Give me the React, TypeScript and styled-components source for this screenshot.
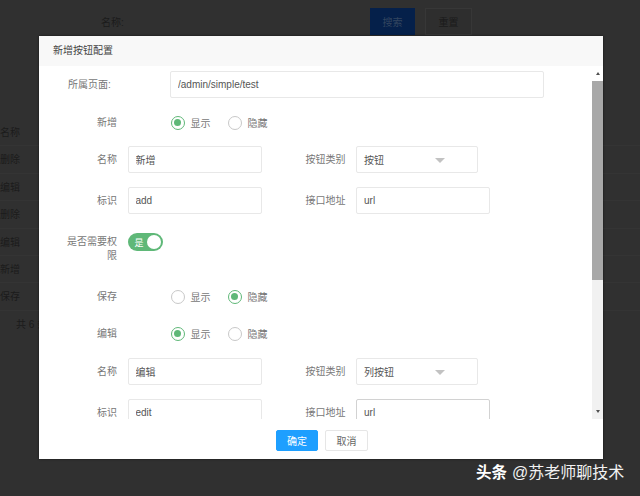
import * as React from "react";
import styled, { createGlobalStyle } from "styled-components";

const GlobalStyle = createGlobalStyle`
  html, body {
    margin: 0;
    height: 100%;
    overflow: hidden;
    background: #303030;
  }
  body {
    font-family: "Liberation Sans", "Noto Sans CJK SC", sans-serif;
  }
`;

const Page = styled.div`
  position: relative;
  width: 640px;
  height: 496px;
  overflow: hidden;
  background: #303030;
  font-size: 10px;
  color: #1b1b1b;
`;

const SearchBar = styled.div`
  display: flex;
  align-items: center;
  height: 27px;
  padding: 8px 0 0 101px;
`;

const SearchLabel = styled.span`
  width: 269px;
`;

const DimButton = styled.div<{ $primary?: boolean }>`
  display: flex;
  align-items: center;
  justify-content: center;
  box-sizing: border-box;
  width: ${(p) => (p.$primary ? 45 : 47)}px;
  height: 27px;
  margin-right: ${(p) => (p.$primary ? 10 : 0)}px;
  background: ${(p) => (p.$primary ? "#05204a" : "#2e2e2e")};
  border: 1px solid ${(p) => (p.$primary ? "#05204a" : "#373737")};
  color: ${(p) => (p.$primary ? "#33455f" : "#1b1b1b")};
`;

const DimTable = styled.div`
  margin-top: 84px;
`;

const DimRow = styled.div`
  height: 27.4px;
  line-height: 27px;
  box-sizing: border-box;
  border-bottom: 1px solid #343434;
`;

const DimPager = styled.div`
  padding-left: 16px;
  height: 27px;
  line-height: 28px;
`;

const Modal = styled.div`
  position: absolute;
  left: 39px;
  top: 36px;
  width: 564px;
  height: 423px;
  display: flex;
  flex-direction: column;
  background: #fff;
  box-shadow: 0 0 2px rgba(0, 0, 0, 0.6);
`;

const ModalTitle = styled.div`
  height: 30px;
  line-height: 30px;
  padding-left: 14px;
  background: #f8f8f8;
  color: #444;
  font-size: 10px;
  flex: none;
`;

const ModalBody = styled.div`
  display: flex;
  flex: 1;
  min-height: 0;
`;

const FormArea = styled.div`
  flex: 1;
  overflow: hidden;
  padding-top: 5px;
`;

const Row = styled.div<{ $top?: number }>`
  display: flex;
  align-items: center;
  min-height: 27px;
  margin-top: ${(p) => p.$top ?? 0}px;
`;

const Label = styled.label`
  flex: none;
  box-sizing: border-box;
  width: 78px;
  padding-top: 1px;
  text-align: right;
  line-height: 14px;
  color: #777;
  font-size: 10px;
  margin-right: 10.5px;
`;

const PathLabel = styled(Label)`
  width: 131px;
  padding-left: 29px;
  text-align: left;
  margin-right: 0;
`;

const SideLabel = styled(Label)`
  width: 84px;
`;

const Field = styled.input<{ $width: number; $focused?: boolean }>`
  flex: none;
  box-sizing: border-box;
  width: ${(p) => p.$width}px;
  height: 27px;
  padding: 0 7px;
  border: 1px solid ${(p) => (p.$focused ? "#d2d2d2" : "#e8e8e8")};
  border-radius: 2px;
  outline: none;
  background: #fff;
  color: #555;
  font: 10px "Liberation Sans", "Noto Sans CJK SC", sans-serif;
`;

const Select = styled.div`
  flex: none;
  display: flex;
  align-items: center;
  box-sizing: border-box;
  width: 122px;
  height: 27px;
  padding-left: 7px;
  border: 1px solid #e8e8e8;
  border-radius: 2px;
  color: #555;
  font-size: 10px;
  position: relative;
`;

const Caret = styled.i`
  position: absolute;
  left: 78px;
  top: 11px;
  width: 0;
  height: 0;
  border-style: solid;
  border-width: 5px 5px 0;
  border-color: #c2c2c2 transparent transparent;
`;

const RadioGroup = styled.div`
  display: flex;
  align-items: center;
  margin-left: 43px;
`;

const RadioItem = styled.div`
  display: flex;
  align-items: center;
  width: 57px;
  color: #777;
  font-size: 10px;
`;

const RadioMark = styled.span<{ $on?: boolean }>`
  display: flex;
  align-items: center;
  justify-content: center;
  box-sizing: border-box;
  width: 14px;
  height: 14px;
  margin-right: 6px;
  border-radius: 50%;
  border: 1.5px solid ${(p) => (p.$on ? "#5fb878" : "#c8c8c8")};

  &::after {
    content: "";
    display: ${(p) => (p.$on ? "block" : "none")};
    width: 7px;
    height: 7px;
    border-radius: 50%;
    background: #5fb878;
  }
`;

const PermissionRow = styled(Row)`
  align-items: flex-start;
`;

const PermissionLabel = styled(Label)`
  padding: 2px 0 0 28px;
`;

const Switch = styled.div`
  display: flex;
  align-items: center;
  justify-content: space-between;
  box-sizing: border-box;
  width: 35px;
  height: 18px;
  padding: 0 2px 0 7px;
  border-radius: 9px;
  background: #5fb878;
  color: #fff;
  font-size: 9px;

  &::after {
    content: "";
    width: 14px;
    height: 14px;
    border-radius: 50%;
    background: #fff;
  }
`;

const ScrollBar = styled.div`
  flex: none;
  display: flex;
  flex-direction: column;
  width: 11px;
  background: #f1f1f1;
`;

const ScrollArrow = styled.div<{ $down?: boolean }>`
  flex: none;
  display: flex;
  align-items: center;
  justify-content: center;
  height: 15px;
  background: ${(p) => (p.$down ? "#f1f1f1" : "#fff")};

  &::after {
    content: "";
    width: 0;
    height: 0;
    border-style: solid;
    border-width: ${(p) => (p.$down ? "3px 2.5px 0" : "0 2.5px 3px")};
    border-color: ${(p) =>
      p.$down
        ? "#505050 transparent transparent"
        : "transparent transparent #505050"};
  }
`;

const ScrollThumb = styled.div`
  flex: none;
  height: 199px;
  background: #a8a8a8;
`;

const ScrollTrack = styled.div`
  flex: 1;
`;

const ModalFooter = styled.div`
  flex: none;
  display: flex;
  justify-content: center;
  align-items: center;
  gap: 7px;
  height: 40px;
  background: #fff;
  box-sizing: border-box;
  padding: 2px 0 0 2px;
`;

const FooterButton = styled.button<{ $primary?: boolean }>`
  box-sizing: border-box;
  width: ${(p) => (p.$primary ? 42 : 43)}px;
  height: 21px;
  padding: 0;
  border: 1px solid ${(p) => (p.$primary ? "#1e9fff" : "#e6e6e6")};
  border-radius: 2px;
  background: ${(p) => (p.$primary ? "#1e9fff" : "#fff")};
  color: ${(p) => (p.$primary ? "#fff" : "#666")};
  font: 10px "Liberation Sans", "Noto Sans CJK SC", sans-serif;
`;

const Watermark = styled.div`
  position: absolute;
  left: 476px;
  top: 462px;
  display: flex;
  align-items: center;
  gap: 5px;
  color: #f2f2f2;
  font-size: 16px;
  line-height: 22px;
  white-space: nowrap;
`;

const WatermarkBrand = styled.b`
  font-size: 15.5px;
  font-weight: 700;
  color: #fff;
`;

type RadioRowProps = { title: string; shown: boolean; top: number };

function RadioRow({ title, shown, top }: RadioRowProps) {
  return (
    <Row $top={top}>
      <Label>{title}</Label>
      <RadioGroup>
        <RadioItem>
          <RadioMark $on={shown} />
          显示
        </RadioItem>
        <RadioItem>
          <RadioMark $on={!shown} />
          隐藏
        </RadioItem>
      </RadioGroup>
    </Row>
  );
}

type ButtonFieldsProps = {
  name: string;
  kind: string;
  code: string;
  top: number;
  focusUrl?: boolean;
};

function ButtonFields({ name, kind, code, top, focusUrl }: ButtonFieldsProps) {
  return (
    <>
      <Row $top={top}>
        <Label>名称</Label>
        <Field $width={134} value={name} readOnly />
        <SideLabel>按钮类别</SideLabel>
        <Select>
          {kind}
          <Caret />
        </Select>
      </Row>
      <Row $top={14}>
        <Label>标识</Label>
        <Field $width={134} value={code} readOnly />
        <SideLabel>接口地址</SideLabel>
        <Field $width={134} $focused={focusUrl} value="url" readOnly />
      </Row>
    </>
  );
}

const tableRows = ["名称", "删除", "编辑", "删除", "编辑", "新增", "保存"];

export default function App() {
  return (
    <Page>
      <GlobalStyle />
      <SearchBar>
        <SearchLabel>名称:</SearchLabel>
        <DimButton $primary>搜索</DimButton>
        <DimButton>重置</DimButton>
      </SearchBar>
      <DimTable>
        {tableRows.map((text, i) => (
          <DimRow key={i}>{text}</DimRow>
        ))}
        <DimPager>共 6 条</DimPager>
      </DimTable>

      <Modal>
        <ModalTitle>新增按钮配置</ModalTitle>
        <ModalBody>
          <FormArea>
            <Row>
              <PathLabel>所属页面:</PathLabel>
              <Field $width={374} value="/admin/simple/test" readOnly />
            </Row>
            <RadioRow title="新增" shown top={11} />
            <ButtonFields name="新增" kind="按钮" code="add" top={10} />
            <PermissionRow $top={19}>
              <PermissionLabel>是否需要权限</PermissionLabel>
              <Switch>是</Switch>
            </PermissionRow>
            <RadioRow title="保存" shown={false} top={20} />
            <RadioRow title="编辑" shown top={10} />
            <ButtonFields name="编辑" kind="列按钮" code="edit" top={11} focusUrl />
          </FormArea>
          <ScrollBar>
            <ScrollArrow />
            <ScrollThumb />
            <ScrollTrack />
            <ScrollArrow $down />
          </ScrollBar>
        </ModalBody>
        <ModalFooter>
          <FooterButton $primary>确定</FooterButton>
          <FooterButton>取消</FooterButton>
        </ModalFooter>
      </Modal>

      <Watermark>
        <WatermarkBrand>头条</WatermarkBrand>
        <span>@苏老师聊技术</span>
      </Watermark>
    </Page>
  );
}
